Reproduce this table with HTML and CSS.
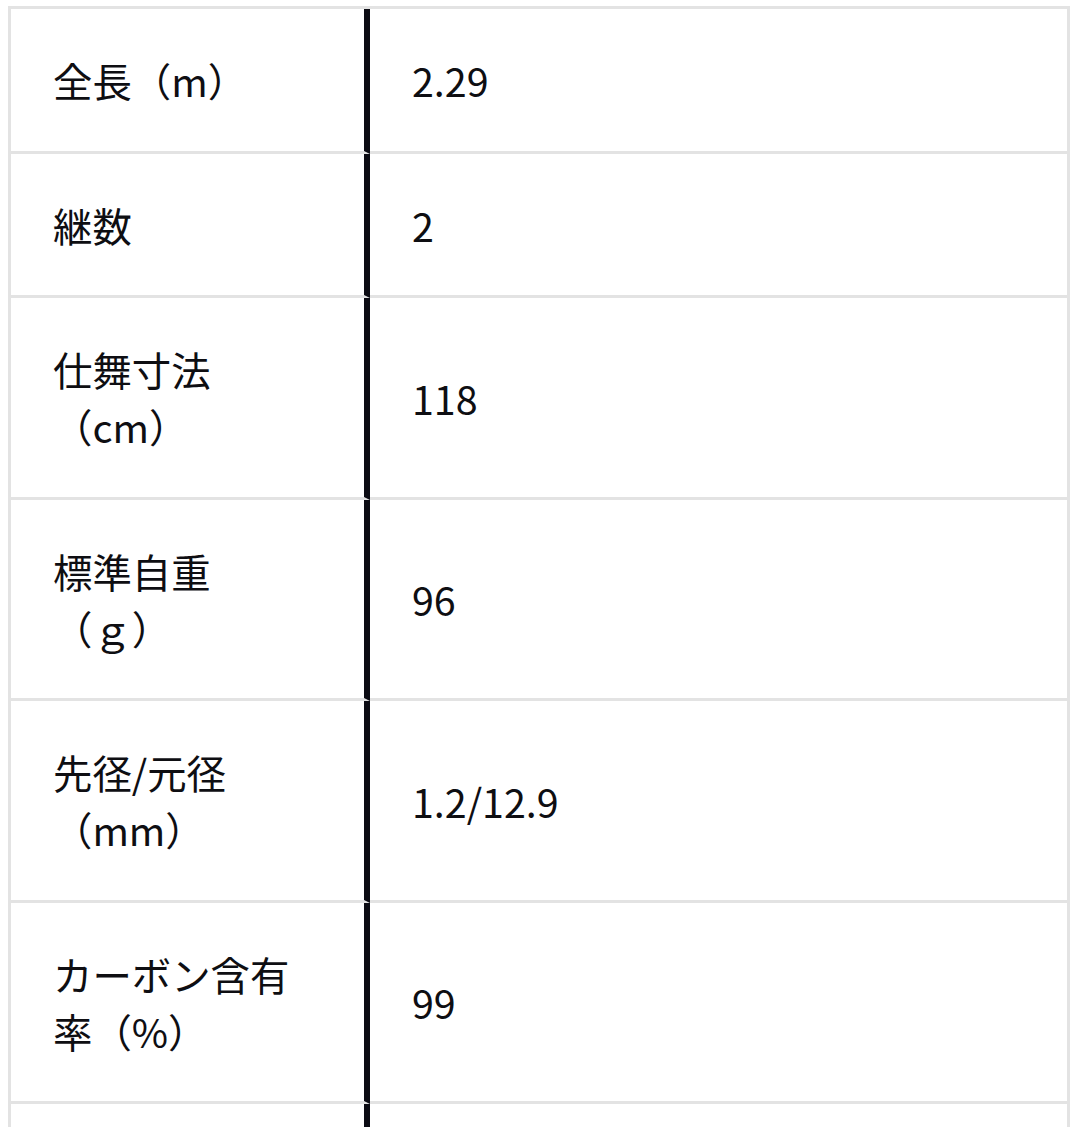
FILE: index.html
```html
<!DOCTYPE html>
<html lang="ja">
<head>
<meta charset="utf-8">
<title>スペック</title>
<link rel="stylesheet" href="styles.css">
</head>
<body>
<table class="spec">
  <tbody>
    <tr><th class="label">全長（m）</th><td class="value">2.29</td></tr>
    <tr><th class="label">継数</th><td class="value">2</td></tr>
    <tr><th class="label">仕舞寸法（cm）</th><td class="value">118</td></tr>
    <tr><th class="label">標準自重（ｇ）</th><td class="value">96</td></tr>
    <tr><th class="label">先径/元径（mm）</th><td class="value">1.2/12.9</td></tr>
    <tr><th class="label">カーボン含有率（%）</th><td class="value">99</td></tr>
    <tr><th class="label">適合ルアー（g）</th><td class="value">1-7</td></tr>
  </tbody>
</table>
</body>
</html>
```
FILE: styles.css
```css
html, body {
  background: #ffffff;
}
body {
  margin: 0;
  font-family: "Noto Sans CJK JP", "Noto Sans", sans-serif;
  color: #0e0e12;
}
.spec {
  margin: 6px 0 0 8px;
  width: 1062px;
  table-layout: fixed;
  border-collapse: separate;
  border-spacing: 0;
  border-top: 3px solid #e3e3e3;
  border-left: 3px solid #e3e3e3;
}
.spec th,
.spec td {
  box-sizing: border-box;
  padding: 42.25px 42px;
  font-size: 39.4px;
  line-height: 57px;
  font-weight: 400;
  text-align: left;
  vertical-align: middle;
  text-spacing-trim: space-all;
  border-bottom: 3px solid #e3e3e3;
}
.label {
  width: 359px;
  border-right: 6px solid #0c0c14;
}
.value {
  border-right: 3px solid #e3e3e3;
}
```
